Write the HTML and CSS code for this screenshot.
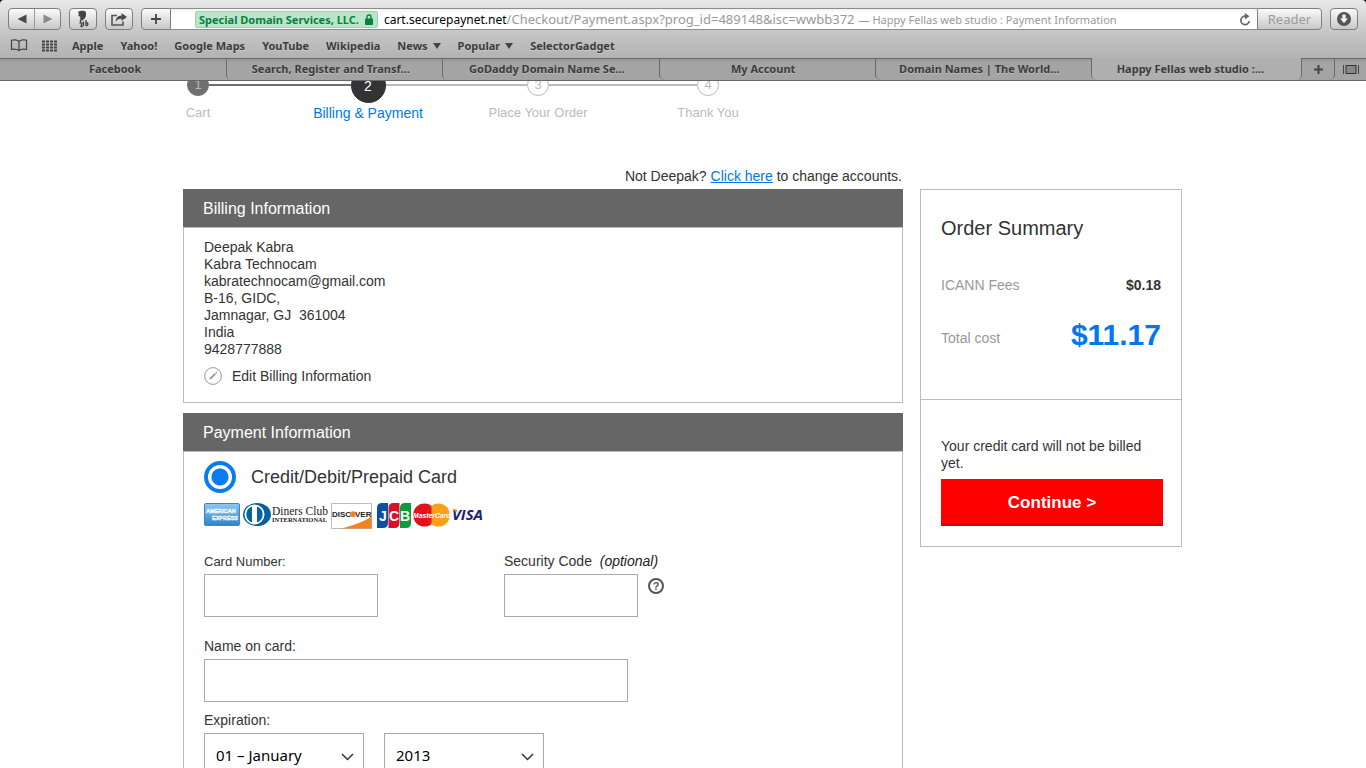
FILE: index.html
```html
<!DOCTYPE html>
<html lang="en">
<head>
<meta charset="utf-8">
<title>Happy Fellas web studio : Payment Information</title>
<link rel="stylesheet" href="styles.css">
</head>
<body>
<header class="chrome">
  <div class="chrome-face">
    <div class="toolbar">
      <div class="nav-pair">
        <button class="nav-btn" type="button" aria-label="Back"><svg width="10" height="10" viewBox="0 0 10 10"><path d="M9.500.5v9L.5 5z" fill="#4a4a4a"/></svg></button>
        <button class="nav-btn nav-next" type="button" aria-label="Forward"><svg width="10" height="10" viewBox="0 0 10 10"><path d="M.5.5v9L9.500 5z" fill="#8a8a8a"/></svg></button>
      </div>
      <button class="tool-btn" type="button" aria-label="Extension"><svg width="14" height="18" viewBox="0 0 14 18"><path d="M2.500 1.500C4.500.5 9 .3 9.800 2c.6 2 .2 4.500-.8 6C8 9.500 6.500 9.500 6.300 11L4.500 9.500C4 8.500 4.600 7.500 4.200 6.800 3.800 6.200 2.600 6.500 2.400 5.500c-.2-.8.7-.8.500-1.600C2.700 3.400 1.800 2.600 2.500 1.500z" fill="#444"/><path d="M4.500 9.500v3.500M3.500 13.300c1.800-1.300 3.500 0 2 1.700s0 2 1.500 1.200M7.500 16v-4.500M10 10v6M9.800 12.700c2.800-.8 2.800 3.400 0 2.900" fill="none" stroke="#444" stroke-width="1.300"/></svg></button>
      <button class="tool-btn" type="button" aria-label="Share"><svg width="18" height="15" viewBox="0 0 18 15"><path d="M7 3.500H2v9.500h11V9.500" fill="none" stroke="#555" stroke-width="1.600"/><path d="M11.500 1 17 5l-5.500 4V6.700C8.600 6.600 7 7.600 5.600 9.600 5.800 5.800 8 3.600 11.500 3.400z" fill="#4c4c4c"/></svg></button>
      <div class="address-group">
        <button class="add-btn" type="button" aria-label="Add bookmark"><svg width="10" height="10" viewBox="0 0 10 10"><path d="M5 0v10M0 5h10" stroke="#444" stroke-width="1.800"/></svg></button>
        <div class="address">
          <span class="cert">Special Domain Services, LLC.<svg width="8" height="11" viewBox="0 0 8 11"><path d="M2 5V3a2 2 0 0 1 4 0v2" fill="none" stroke="#0b7f3e" stroke-width="1.400"/><rect y="4.500" width="8" height="6.500" rx=".8" fill="#0b7f3e"/></svg></span>
          <span class="url"><b>cart.securepaynet.net</b>/Checkout/Payment.aspx?prog_id=489148&amp;isc=wwbb372</span>
          <span class="url-title">— Happy Fellas web studio : Payment Information</span>
          <button class="reload" type="button" aria-label="Reload"><svg width="12" height="13" viewBox="0 0 12 13"><path d="M6.500 3.200A4.200 4.200 0 1 0 10.200 8" fill="none" stroke="#666" stroke-width="1.700"/><path d="M5.800 0v6.400L10.500 3.200z" fill="#666"/></svg></button>
        </div>
        <button class="reader" type="button">Reader</button>
      </div>
      <button class="tool-btn" type="button" aria-label="Downloads"><svg width="16" height="16" viewBox="0 0 16 16"><circle cx="8" cy="8" r="7" fill="#555"/><path d="M6.300 3.500h3.400v4h2.300L8 12.300 4 7.500h2.300z" fill="#f0f0f0"/></svg></button>
    </div>
    <nav class="bookmarks" aria-label="Bookmarks">
      <button class="icon-btn" type="button" aria-label="Show bookmarks"><svg width="18" height="13" viewBox="0 0 18 13"><path d="M9 2.500C7.500.8 3.500.5 1.500 1.200V10.500c2.500-.6 6-.3 7.500 1.200 1.500-1.500 5-1.800 7.500-1.200V1.200C14.500.5 10.500.8 9 2.500zM9 2.500v9" fill="none" stroke="#444" stroke-width="1.200"/></svg></button>
      <button class="icon-btn" type="button" aria-label="Top sites"><svg width="16" height="12" viewBox="0 0 16 12"><path d="M0 1.500h16M0 4.500h16M0 7.500h16M0 10.500h16" stroke="#444" stroke-width="2" stroke-dasharray="3 1"/></svg></button>
      <a href="#">Apple</a><a href="#">Yahoo!</a><a href="#">Google Maps</a><a href="#">YouTube</a><a href="#">Wikipedia</a>
      <a href="#" class="folder">News</a><a href="#" class="folder">Popular</a><a href="#">SelectorGadget</a>
    </nav>
    <div class="tabs">
      <button class="tab tab-first" type="button">Facebook</button>
      <button class="tab" type="button">Search, Register and Transf...</button>
      <button class="tab" type="button">GoDaddy Domain Name Se...</button>
      <button class="tab" type="button">My Account</button>
      <button class="tab" type="button">Domain Names | The World...</button>
      <button class="tab tab-active" type="button">Happy Fellas web studio :...</button>
      <button class="tab-tool" type="button" aria-label="New tab"><svg width="9" height="9" viewBox="0 0 9 9"><path d="M4.500 0v9M0 4.500h9" stroke="#444" stroke-width="2"/></svg></button>
      <button class="tab-tool tab-all" type="button" aria-label="Show all tabs"><svg width="16" height="9" viewBox="0 0 16 9"><path d="M.5 0v9M15.500 0v9" stroke="#444"/><rect x="3" y=".5" width="10" height="8" fill="#888" stroke="#333"/></svg></button>
    </div>
  </div>
</header>

<main class="viewport">
  <div class="page">
    <ol class="steps">
      <li class="step done"><span class="mark"><i>1</i></span><span class="name">Cart</span></li>
      <li class="step current"><span class="mark"><i>2</i></span><span class="name">Billing &amp; Payment</span></li>
      <li class="step"><span class="mark"><i>3</i></span><span class="name">Place Your Order</span></li>
      <li class="step"><span class="mark"><i>4</i></span><span class="name">Thank You</span></li>
    </ol>

    <div class="columns">
      <p class="switch">Not Deepak? <a href="#">Click here</a> to change accounts.</p>
      <div class="forms">
        <section class="panel">
          <h2>Billing Information</h2>
          <div class="panel-body billing">
            <address>Deepak Kabra<br>Kabra Technocam<br>kabratechnocam@gmail.com<br>B-16, GIDC,<br>Jamnagar, GJ&nbsp; 361004<br>India<br>9428777888</address>
            <a class="edit" href="#"><svg width="18" height="18" viewBox="0 0 18 18"><circle cx="9" cy="9" r="8.400" fill="none" stroke="#999"/><path d="m5.300 12.700.6-2 4.800-4.800 1.400 1.400-4.800 4.800z" fill="#999"/><path d="m11.300 5.300.7-.7 1.400 1.400-.7.7z" fill="#999"/></svg>Edit Billing Information</a>
          </div>
        </section>

        <section class="panel">
          <h2>Payment Information</h2>
          <form class="panel-body payment">
            <label class="method"><input type="radio" name="method" checked>Credit/Debit/Prepaid Card</label>
            <div class="cards">
              <svg width="36" height="23" viewBox="0 0 36 23" role="img" aria-label="American Express"><defs><linearGradient id="amex" x2="0" y2="1"><stop stop-color="#8cc8f4"/><stop offset="1" stop-color="#2d83cf"/></linearGradient></defs><rect x=".5" y=".5" width="35" height="22" rx="1.500" fill="url(#amex)" stroke="#3b87c8"/><g fill="none" stroke="#fff" font-family="Liberation Sans" font-weight="700" font-size="5.500" stroke-width=".5"><text x="2" y="10">AMERICAN</text><text x="8" y="17">EXPRESS</text></g></svg>
              <svg width="87" height="26" viewBox="0 0 87 26" role="img" aria-label="Diners Club International"><ellipse cx="15" cy="11.500" rx="14" ry="11.500" fill="#07619f"/><circle cx="12.500" cy="11.500" r="10" fill="#fff"/><path d="M10 3.500a8.500 8.500 0 0 0 0 16zM15 3.500a8.500 8.500 0 0 1 0 16z" fill="#07619f"/><text x="30" y="12" font-family="Liberation Serif" font-size="11.500" fill="#222">Diners Club</text><text x="30" y="19" font-family="Liberation Serif" font-weight="700" font-size="6.500" fill="#222">INTERNATIONAL</text></svg>
              <svg width="41" height="26" viewBox="0 0 41 26" role="img" aria-label="Discover"><path d="M.5.5h40v25H.5z" fill="#fff" stroke="#bbb"/><path d="M40.500 13.500C32 19 20 23.500 9 25.500h31.500z" fill="#f58220"/><g font-family="Liberation Sans" font-weight="700" font-size="8" fill="#222"><text x="1" y="14">DISC</text><text x="24" y="14">VER</text></g><circle cx="22" cy="11.200" r="2.900" fill="#f58220"/></svg>
              <svg class="jcb" width="34" height="25" viewBox="0 0 34 25" role="img" aria-label="JCB"><path d="M11 0v20q0 5-5 5H0V5q0-5 5-5z" fill="#0b4ea2"/><path d="M22.500 0v20q0 5-5 5h-6V5q0-5 5-5z" fill="#d8112b"/><path d="M34 0v20q0 5-5 5h-6V5q0-5 5-5z" fill="#0d9b3d"/><g font-family="Liberation Sans" font-weight="700" font-size="14" fill="#fff"><text x="2" y="18">J</text><text x="12" y="18">C</text><text x="23" y="18">B</text></g></svg>
              <svg width="37" height="24" viewBox="0 0 37 24" role="img" aria-label="MasterCard"><circle cx="11.500" cy="12" r="11.500" fill="#e2121d"/><circle cx="25.500" cy="12" r="11.500" fill="#f9a01b"/><path d="M18.500 2.900a11.500 11.500 0 0 0 0 18.200z" fill="#e2121d"/><text x="0" y="14.500" font-family="Liberation Sans" font-weight="700" font-style="italic" font-size="6.800" fill="#fff">MasterCard</text></svg>
              <svg width="34" height="24" viewBox="0 0 34 24" role="img" aria-label="Visa"><text x="0" y="17" font-family="Open Sans" font-weight="700" font-style="italic" font-size="15" fill="#17207c">VISA</text><path d="M0 6.100h4.500l1.500 4z" fill="#f9a533"/></svg>
            </div>
            <div class="row">
              <div class="field">
                <label class="small" for="number">Card Number:</label>
                <input class="w-number" id="number" type="text">
              </div>
              <div class="field">
                <label for="code">Security Code &nbsp;<em>(optional)</em></label>
                <div class="with-help"><input class="w-code" id="code" type="text"><button class="help" type="button" aria-label="What is this?">?</button></div>
              </div>
            </div>
            <div class="field holder">
              <label for="holder">Name on card:</label>
              <input class="w-name" id="holder" type="text">
            </div>
            <div class="field">
              <label for="month">Expiration:</label>
              <div class="selects">
                <div class="select"><select id="month"><option>01 – January</option></select><svg width="13" height="8" viewBox="0 0 13 8"><path d="m1 1 5.500 5.500L12 1" fill="none" stroke="#333" stroke-width="1.500"/></svg></div>
                <div class="select"><select aria-label="Year"><option>2013</option></select><svg width="13" height="8" viewBox="0 0 13 8"><path d="m1 1 5.500 5.500L12 1" fill="none" stroke="#333" stroke-width="1.500"/></svg></div>
              </div>
            </div>
          </form>
        </section>
      </div>

      <aside class="summary">
        <div class="totals">
          <h3>Order Summary</h3>
          <dl>
            <div class="line"><dt>ICANN Fees</dt><dd>$0.18</dd></div>
            <div class="line total"><dt>Total cost</dt><dd>$11.17</dd></div>
          </dl>
        </div>
        <div class="checkout">
          <p>Your credit card will not be billed yet.</p>
          <button class="continue" type="button">Continue &gt;</button>
        </div>
      </aside>
    </div>
  </div>
</main>
</body>
</html>
```
FILE: styles.css
```css
* { box-sizing: border-box; }

body {
  margin: 0;
  height: 100vh;
  overflow: hidden;
  display: flex;
  flex-direction: column;
  background: #fff;
  color: #333;
  font: 14px/17px "Liberation Sans", sans-serif;
}

button { font: inherit; color: inherit; padding: 0; cursor: pointer; }
svg { display: block; flex: none; }
h2, h3, p, ol, dl, dd { margin: 0; padding: 0; font-weight: 400; }

/* Browser window */
.chrome {
  flex: none;
  background: #000;
  font: 700 11px/15px "Noto Sans", sans-serif;
  color: #3c3c3c;
}
.chrome-face {
  border-radius: 4px 4px 0 0;
  background: linear-gradient(#e9e9e9, #c6c6c6 32px, #b0b0b0 60px, #ababab);
}
.toolbar { display: flex; gap: 8px; padding: 8px 8px 0; }
.nav-pair, .tool-btn, .add-btn, .reader {
  height: 22px;
  border: 1px solid #7f7f7f;
  border-radius: 4px;
  background: linear-gradient(#fafafa, #c8c8c8);
}
.nav-pair { display: flex; width: 53px; }
.nav-btn {
  flex: 1;
  border: 0;
  background: none;
  display: flex;
  align-items: center;
  justify-content: center;
}
.nav-next { border-left: 1px solid #999; }
.tool-btn, .add-btn {
  width: 28px;
  display: flex;
  align-items: center;
  justify-content: center;
}
.address-group { flex: 1; min-width: 0; display: flex; }
.add-btn { width: 30px; border-radius: 4px 0 0 4px; }
.address {
  flex: 1;
  min-width: 0;
  display: flex;
  align-items: center;
  height: 22px;
  padding: 0 6px 0 24px;
  border: 1px solid #8c8c8c;
  border-width: 1px 0;
  background: linear-gradient(#f2f2f2, #fff 4px);
  overflow: hidden;
  white-space: nowrap;
}
.cert {
  display: flex;
  align-items: center;
  gap: 6px;
  padding: 0 4px 0 3px;
  margin-right: 6px;
  border: 1px solid #9bd3b2;
  border-radius: 2px;
  background: #b8e6ca;
  color: #0b7f3e;
}
.url, .url-title { font-weight: 400; color: #999; }
.url { font-size: 13px; }
.url b { font-size: 12px; font-weight: 400; color: #000; }
.url-title { margin-left: 4px; }
.reload { margin-left: auto; border: 0; background: none; }
.reader {
  width: 65px;
  border-radius: 0 4px 4px 0;
  font-weight: 400;
  font-size: 13px;
  color: #9a9a9a;
}

.bookmarks {
  display: flex;
  align-items: center;
  gap: 17px;
  height: 28px;
  padding: 3px 10px 0;
  white-space: nowrap;
  text-shadow: 0 1px 0 #c8c8c8;
}
.bookmarks a { color: inherit; text-decoration: none; }
.icon-btn { border: 0; background: none; margin-right: -3px; }
.folder { display: flex; align-items: center; gap: 5px; }
.folder::after {
  content: "";
  border: 4px solid transparent;
  border-top: 6px solid #444;
  border-bottom: 0;
}

.tabs {
  display: flex;
  height: 23px;
  border-bottom: 1px solid #666;
}
.tab, .tab-tool {
  border: 0 solid #6a6a6a;
  border-top-width: 1px;
  background: linear-gradient(#989898, #a4a4a4 4px);
  text-shadow: 0 1px 0 #bbb;
}
.tab {
  flex: 1 1 216px;
  min-width: 0;
  padding: 0 8px 2px 0;
  border-left-width: 1px;
  border-bottom-left-radius: 5px;
  overflow: hidden;
  white-space: nowrap;
}
.tab-first { flex-basis: 226px; padding-left: 12px; border-left-width: 0; border-radius: 0; }
.tab-active {
  flex-basis: 211px;
  padding-right: 12px;
  border-width: 0 1px;
  border-radius: 0 0 5px 5px;
  background: #afafaf;
}
.tab-tool {
  width: 33px;
  display: flex;
  align-items: center;
  justify-content: center;
  border-right-width: 1px;
  border-bottom-right-radius: 5px;
}
.tab-all { width: 31px; border-right-width: 0; border-radius: 0; }

/* Checkout page */
.viewport { flex: 1; min-height: 0; overflow: hidden; }
.page { max-width: 1000px; margin: -14px auto 0; }

.steps { display: flex; gap: 140px; list-style: none; }
.step {
  position: relative;
  display: flex;
  flex-direction: column;
  align-items: center;
  width: 30px;
  white-space: nowrap;
  color: #bbb;
  font-size: 13px;
  line-height: 20px;
}
.step::before {
  content: "";
  position: absolute;
  top: 17px;
  left: 26px;
  width: 148px;
  height: 2px;
  background: #bbb;
}
.step:last-child::before { display: none; }
.mark { position: relative; display: flex; align-items: center; height: 36px; }
.mark i {
  width: 22px;
  height: 22px;
  border: 1px solid #bbb;
  border-radius: 50%;
  background: #fff;
  font-style: normal;
  text-align: center;
}
.done .mark i { background: #6f6f6f; border-color: #6f6f6f; }
.done::before { background: #6f6f6f; }
.current { font-size: 14px; color: #0077f0; }
.current .mark i {
  width: 35px;
  height: 35px;
  background: #333;
  border-color: #333;
  color: #fff;
  line-height: 34px;
}

.columns {
  display: grid;
  grid-template-columns: minmax(0, 720px) 262px;
  column-gap: 17px;
  align-items: start;
  padding-top: 45px;
}
.switch { grid-column: 1; text-align: right; padding: 0 1px 4px; }
.switch a { color: #0077f0; }
.forms { grid-column: 1; display: grid; gap: 10px; }
.panel h2 {
  padding: 1px 20px 0;
  background: #666;
  color: #fff;
  font-size: 16px;
  line-height: 37px;
}
.panel-body { border: 1px solid #bbb; padding: 0 20px; }
.billing { padding-top: 11px; padding-bottom: 17px; }
address { font-style: normal; }
.edit {
  display: flex;
  align-items: center;
  gap: 10px;
  width: fit-content;
  margin-top: 9px;
  color: inherit;
  text-decoration: none;
}

.payment { padding-top: 9px; padding-bottom: 20px; }
.method { display: flex; align-items: center; gap: 15px; font-size: 18px; }
.method input {
  appearance: none;
  width: 32px;
  height: 32px;
  margin: 0;
  border: 4px solid #0a7cf2;
  border-radius: 50%;
  background: radial-gradient(circle, #0a7cf2 8px, #fff 9px);
}
.cards { display: flex; gap: 2px; height: 26px; margin: 10px 0 24px; }
.jcb { margin: 0 0 0 3px; }
.row { display: flex; gap: 126px; }
.field { display: flex; flex-direction: column; gap: 4px; margin-bottom: 21px; }
.holder { margin-bottom: 10px; }
.field em { color: #222; }
.small { font-size: 13px; }
.field input, .select select {
  height: 43px;
  border: 1px solid #aaa;
  border-radius: 0;
  background: #fff;
  padding: 0 11px;
  max-width: 100%;
  font: 15px "Noto Sans", sans-serif;
  color: #000;
}
.w-number { width: 174px; }
.w-code { width: 134px; }
.w-name { width: 424px; }
.with-help { display: flex; gap: 10px; }
.help {
  width: 16px;
  height: 16px;
  margin-top: 4px;
  border: 2px solid #555;
  border-radius: 50%;
  background: #fff;
  color: #555;
  font-size: 11px;
  font-weight: 700;
  line-height: 12px;
}
.selects { display: flex; gap: 20px; }
.select { display: grid; width: 160px; align-items: center; }
.select > * { grid-area: 1 / 1; }
.select select { appearance: none; width: 100%; }
.select svg { justify-self: end; margin: 4px 10px 0 0; pointer-events: none; }

.summary { border: 1px solid #bbb; }
.totals { padding: 26px 20px 46px; border-bottom: 1px solid #bbb; }
.totals h3 { font-size: 20px; line-height: 24px; }
.line { display: flex; justify-content: space-between; align-items: center; }
.line dt { color: #999; }
.line dd { font-weight: 700; }
dl { display: grid; gap: 23px; padding-top: 37px; }
.total dd { color: #0077f0; font-size: 30px; line-height: 36px; }
.total dt { padding-top: 6px; }
.checkout { padding: 38px 18px 20px 20px; }
.continue {
  width: 100%;
  height: 47px;
  margin-top: 7px;
  padding-top: 3px;
  border: 0;
  border-bottom: 3px solid #d80000;
  background: #f00;
  color: #fff;
  font-size: 17px;
  font-weight: 700;
}
```
